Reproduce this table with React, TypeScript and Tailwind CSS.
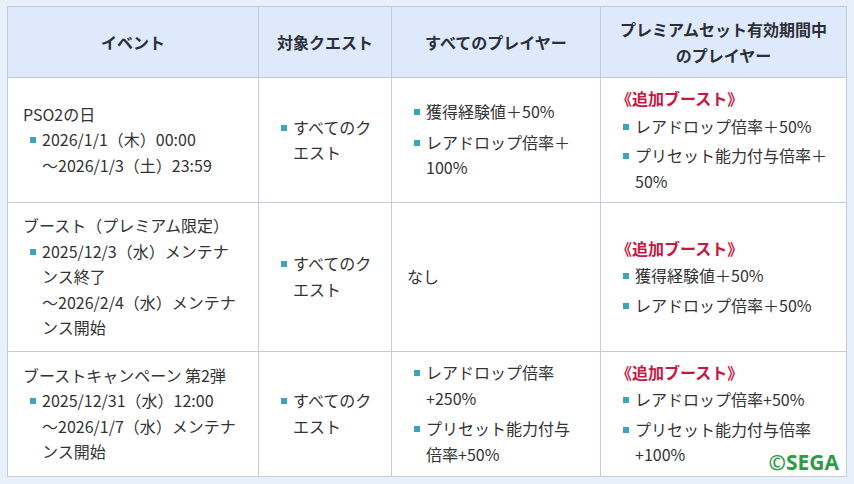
// Boost campaign table

import type { ReactNode } from 'react';

function Item({ children }: { children: ReactNode }) {
  return (
    <li className="flex">
      <span className="shrink-0 mt-[10px] ml-[7px] mr-[6px] w-[6px] h-[6px] bg-[#3ba6ba]" />
      <span className="whitespace-nowrap">{children}</span>
    </li>
  );
}

function Extra({ children }: { children: ReactNode }) {
  return (
    <div className="flex flex-col">
      <div className="font-bold text-[#c8173f] whitespace-nowrap">《追加ブースト》</div>
      <ul className="flex flex-col gap-[4px] mt-[2px]">{children}</ul>
    </div>
  );
}

const th = 'border border-[#c3cbd8] py-[9px] px-[10px] font-bold text-center leading-[26px] text-[#2b2f38]';
const td = 'border border-[#c3cbd8] py-[8px] px-[15px] align-middle';
const tdTall = 'border border-[#c3cbd8] py-[10px] px-[15px] align-middle';

export default function App() {
  return (
    <div className="relative w-[854px] h-[484px] overflow-hidden bg-[#e8f0fc] pt-[6px] pl-[7px] font-['Noto_Sans_CJK_JP','Noto_Sans',sans-serif]">
      <table className="table-fixed border-collapse w-[839px] text-[16px] leading-[25.5px] text-[#333]">
        <colgroup>
          <col className="w-[251px]" />
          <col className="w-[133px]" />
          <col className="w-[209px]" />
          <col className="w-[246px]" />
        </colgroup>
        <thead>
          <tr className="bg-[#dee9fb]">
            <th className={th}>イベント</th>
            <th className={th}>対象クエスト</th>
            <th className={th}>すべてのプレイヤー</th>
            <th className={th}>
              プレミアムセット有効期間中
              <br />
              のプレイヤー
            </th>
          </tr>
        </thead>
        <tbody className="bg-white">
          <tr>
            <td className={td}>
              <div className="whitespace-nowrap">PSO2の日</div>
              <ul>
                <Item>
                  2026/1/1（木）00:00
                  <br />
                  ～2026/1/3（土）23:59
                </Item>
              </ul>
            </td>
            <td className={td}>
              <ul>
                <Item>
                  すべてのク
                  <br />
                  エスト
                </Item>
              </ul>
            </td>
            <td className={td}>
              <ul className="flex flex-col gap-[5px]">
                <Item>獲得経験値＋50%</Item>
                <Item>
                  レアドロップ倍率＋
                  <br />
                  100%
                </Item>
              </ul>
            </td>
            <td className={td}>
              <Extra>
                <Item>レアドロップ倍率＋50%</Item>
                <Item>
                  プリセット能力付与倍率＋
                  <br />
                  50%
                </Item>
              </Extra>
            </td>
          </tr>

          <tr>
            <td className={tdTall}>
              <div className="whitespace-nowrap">ブースト（プレミアム限定）</div>
              <ul>
                <Item>
                  2025/12/3（水）メンテナ
                  <br />
                  ンス終了
                  <br />
                  ～2026/2/4（水）メンテナ
                  <br />
                  ンス開始
                </Item>
              </ul>
            </td>
            <td className={tdTall}>
              <ul>
                <Item>
                  すべてのク
                  <br />
                  エスト
                </Item>
              </ul>
            </td>
            <td className={tdTall}>なし</td>
            <td className={tdTall}>
              <Extra>
                <Item>獲得経験値＋50%</Item>
                <Item>レアドロップ倍率＋50%</Item>
              </Extra>
            </td>
          </tr>

          <tr>
            <td className={td}>
              <div className="whitespace-nowrap">ブーストキャンペーン 第2弾</div>
              <ul>
                <Item>
                  2025/12/31（水）12:00
                  <br />
                  ～2026/1/7（水）メンテナ
                  <br />
                  ンス開始
                </Item>
              </ul>
            </td>
            <td className={td}>
              <ul>
                <Item>
                  すべてのク
                  <br />
                  エスト
                </Item>
              </ul>
            </td>
            <td className={td}>
              <ul className="flex flex-col gap-[5px]">
                <Item>
                  レアドロップ倍率
                  <br />
                  +250%
                </Item>
                <Item>
                  プリセット能力付与
                  <br />
                  倍率+50%
                </Item>
              </ul>
            </td>
            <td className={td}>
              <Extra>
                <Item>レアドロップ倍率+50%</Item>
                <Item>
                  プリセット能力付与倍率
                  <br />
                  +100%
                </Item>
              </Extra>
            </td>
          </tr>
        </tbody>
      </table>

      {/* watermark */}
      <div className="absolute right-[15px] bottom-[11px] text-[21px] leading-none font-bold text-[#2e9b47] font-['Open_Sans',sans-serif]">
        ©SEGA
      </div>
    </div>
  );
}
